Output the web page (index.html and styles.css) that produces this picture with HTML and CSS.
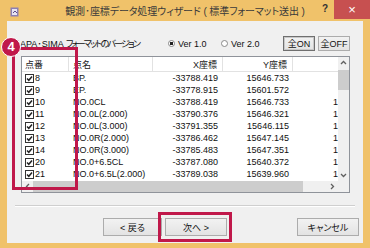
FILE: index.html
```html
<!DOCTYPE html>
<html lang="ja">
<head>
<meta charset="utf-8">
<link rel="stylesheet" href="styles.css">
</head>
<body>
<div class="window">
  <div class="titlebar">
    <div class="tb-left">
      <svg class="app-icon" width="10" height="10" viewBox="0 0 10 10">
        <rect x="0.5" y="0.5" width="8" height="9" fill="#8c7fb4"/>
        <rect x="2" y="2" width="5" height="6" fill="#e8e4f2"/>
        <path d="M3 6 L5 4 L7 6" stroke="#5a4b8a" stroke-width="1" fill="none"/>
      </svg>
    </div>
    <div class="title">観測･座標データ処理ウィザード ( 標準フォーマット送出 )</div>
    <div class="tb-right">
      <div class="help">?</div>
      <div class="close">×</div>
    </div>
  </div>

  <div class="client">
    <div class="top-row">
      <span class="label">APA･SIMA <span class="kana">フォーマットのバージョン</span></span>
      <span class="radio r1"><span class="dot on"></span>Ver 1.0</span>
      <span class="radio r2"><span class="dot"></span>Ver 2.0</span>
      <button class="btn small default">全ON</button>
      <button class="btn small">全OFF</button>
    </div>

    <div class="listview">
      <div class="lv-content">
        <div class="lv-row lv-head">
          <div class="c1">点番</div>
          <div class="c2">点名</div>
          <div class="c3">X座標</div>
          <div class="c4">Y座標</div>
          <div class="c5"></div>
        </div>
        <div class="lv-row"><div class="c1"><svg class="cb" width="9" height="9" viewBox="0 0 9 9"><rect x="0.5" y="0.5" width="8" height="8" fill="#fff" stroke="#333"/><path d="M2 4.5 L3.8 6.3 L7 2.5" stroke="#222" stroke-width="1.5" fill="none"/></svg>8</div><div class="c2">BP.</div><div class="c3">-33788.419</div><div class="c4">15646.733</div><div class="c5"></div></div>
        <div class="lv-row"><div class="c1"><svg class="cb" width="9" height="9" viewBox="0 0 9 9"><rect x="0.5" y="0.5" width="8" height="8" fill="#fff" stroke="#333"/><path d="M2 4.5 L3.8 6.3 L7 2.5" stroke="#222" stroke-width="1.5" fill="none"/></svg>9</div><div class="c2">EP.</div><div class="c3">-33778.915</div><div class="c4">15601.572</div><div class="c5"></div></div>
        <div class="lv-row"><div class="c1"><svg class="cb" width="9" height="9" viewBox="0 0 9 9"><rect x="0.5" y="0.5" width="8" height="8" fill="#fff" stroke="#333"/><path d="M2 4.5 L3.8 6.3 L7 2.5" stroke="#222" stroke-width="1.5" fill="none"/></svg>10</div><div class="c2">NO.0CL</div><div class="c3">-33788.419</div><div class="c4">15646.733</div><div class="c5">1</div></div>
        <div class="lv-row"><div class="c1"><svg class="cb" width="9" height="9" viewBox="0 0 9 9"><rect x="0.5" y="0.5" width="8" height="8" fill="#fff" stroke="#333"/><path d="M2 4.5 L3.8 6.3 L7 2.5" stroke="#222" stroke-width="1.5" fill="none"/></svg>11</div><div class="c2">NO.0L(2.000)</div><div class="c3">-33790.376</div><div class="c4">15646.321</div><div class="c5">1</div></div>
        <div class="lv-row"><div class="c1"><svg class="cb" width="9" height="9" viewBox="0 0 9 9"><rect x="0.5" y="0.5" width="8" height="8" fill="#fff" stroke="#333"/><path d="M2 4.5 L3.8 6.3 L7 2.5" stroke="#222" stroke-width="1.5" fill="none"/></svg>12</div><div class="c2">NO.0L(3.000)</div><div class="c3">-33791.355</div><div class="c4">15646.115</div><div class="c5">1</div></div>
        <div class="lv-row"><div class="c1"><svg class="cb" width="9" height="9" viewBox="0 0 9 9"><rect x="0.5" y="0.5" width="8" height="8" fill="#fff" stroke="#333"/><path d="M2 4.5 L3.8 6.3 L7 2.5" stroke="#222" stroke-width="1.5" fill="none"/></svg>13</div><div class="c2">NO.0R(2.000)</div><div class="c3">-33786.462</div><div class="c4">15647.145</div><div class="c5">1</div></div>
        <div class="lv-row"><div class="c1"><svg class="cb" width="9" height="9" viewBox="0 0 9 9"><rect x="0.5" y="0.5" width="8" height="8" fill="#fff" stroke="#333"/><path d="M2 4.5 L3.8 6.3 L7 2.5" stroke="#222" stroke-width="1.5" fill="none"/></svg>14</div><div class="c2">NO.0R(3.000)</div><div class="c3">-33785.483</div><div class="c4">15647.351</div><div class="c5">1</div></div>
        <div class="lv-row"><div class="c1"><svg class="cb" width="9" height="9" viewBox="0 0 9 9"><rect x="0.5" y="0.5" width="8" height="8" fill="#fff" stroke="#333"/><path d="M2 4.5 L3.8 6.3 L7 2.5" stroke="#222" stroke-width="1.5" fill="none"/></svg>20</div><div class="c2">NO.0+6.5CL</div><div class="c3">-33787.080</div><div class="c4">15640.372</div><div class="c5">1</div></div>
        <div class="lv-row"><div class="c1"><svg class="cb" width="9" height="9" viewBox="0 0 9 9"><rect x="0.5" y="0.5" width="8" height="8" fill="#fff" stroke="#333"/><path d="M2 4.5 L3.8 6.3 L7 2.5" stroke="#222" stroke-width="1.5" fill="none"/></svg>21</div><div class="c2">NO.0+6.5L(2.000)</div><div class="c3">-33789.038</div><div class="c4">15639.960</div><div class="c5">1</div></div>
      </div>
      <div class="vscroll">
        <div class="arrow"><svg width="7" height="5" viewBox="0 0 7 5"><path d="M1 4 L3.5 1.5 L6 4" stroke="#606060" stroke-width="1.3" fill="none"/></svg></div>
        <div class="vthumb"></div>
        <div class="spacer"></div>
        <div class="arrow"><svg width="7" height="5" viewBox="0 0 7 5"><path d="M1 1 L3.5 3.5 L6 1" stroke="#606060" stroke-width="1.3" fill="none"/></svg></div>
      </div>
      <div class="hscroll">
        <div class="arrow"><svg width="5" height="7" viewBox="0 0 5 7"><path d="M4 1 L1.5 3.5 L4 6" stroke="#606060" stroke-width="1.3" fill="none"/></svg></div>
        <div class="hthumb"></div>
        <div class="spacer"></div>
        <div class="arrow"><svg width="5" height="7" viewBox="0 0 5 7"><path d="M1 1 L3.5 3.5 L1 6" stroke="#606060" stroke-width="1.3" fill="none"/></svg></div>
      </div>
      <div class="corner"></div>
    </div>

    <div class="separator"></div>

    <div class="button-row">
      <button class="btn back">&lt; 戻る</button>
      <button class="btn next">次へ &gt;</button>
      <button class="btn cancel">キャンセル</button>
    </div>
  </div>

  <div class="hl hl1"></div>
  <div class="badge">4</div>
  <div class="hl hl2"></div>
</div>
</body>
</html>
```

FILE: styles.css
```css
html, body {
  margin: 0;
  padding: 0;
}

body {
  width: 370px;
  height: 248px;
  overflow: hidden;
  font-family: "Liberation Sans", "Noto Sans CJK JP", sans-serif;
  font-size: 9px;
  color: #111;
  font-feature-settings: "palt";
}

.window {
  position: relative;
  width: 370px;
  height: 248px;
  background: #f0c26a;
  display: flex;
  flex-direction: column;
}

/* title bar */
.titlebar {
  height: 21px;
  display: grid;
  grid-template-columns: 1fr auto 1fr;
}

.tb-left {
  display: flex;
  align-items: flex-start;
  padding: 7px 0 0 10px;
}

.title {
  align-self: center;
  font-size: 10px;
  letter-spacing: -0.1px;
  color: #3a3a3a;
  white-space: nowrap;
}

.tb-right {
  display: flex;
  justify-content: flex-end;
  align-items: flex-start;
}

.help {
  font-family: "Liberation Sans", sans-serif;
  font-weight: bold;
  font-size: 10px;
  color: #333;
  margin: 3px 6px 0 0;
}

.close {
  width: 36px;
  height: 19px;
  background: #c75050;
  color: #fff;
  font-size: 13px;
  line-height: 19px;
  text-align: center;
}

/* client area */
.client {
  margin: 0 7px;
  height: 222px;
  background: #f0f0f0;
  display: flex;
  flex-direction: column;
}

.top-row {
  display: flex;
  align-items: center;
  height: 15px;
  margin: 15px 13px 0 13px;
  white-space: nowrap;
}

.label {
  width: 148px;
  flex: none;
}

.kana {
  letter-spacing: -1.8px;
}

.radio {
  display: flex;
  align-items: center;
  gap: 3px;
  flex: none;
}

.r1 { width: 53px; }
.r2 { width: 62px; }

.dot {
  width: 7px;
  height: 7px;
  border: 1px solid #8a8a8a;
  border-radius: 50%;
  background: #fff;
  box-sizing: border-box;
}

.dot.on {
  background: radial-gradient(circle, #222 0 1.6px, #fff 2px);
}

.btn {
  font-family: inherit;
  font-size: 9px;
  font-feature-settings: "palt";
  color: #111;
  background: linear-gradient(#f2f2f2, #e3e3e3);
  border: 1px solid #acacac;
  padding: 0;
  margin: 0;
  box-sizing: border-box;
}

.btn.small {
  width: 32px;
  height: 15px;
  flex: none;
}

.btn.small + .btn.small {
  margin-left: 3px;
}

.btn.default {
  border-color: #6f6f6f;
  box-shadow: inset 0 0 0 1px #c8c8c8;
}

/* list view */
.listview {
  margin: 5px 0 0 14px;
  width: 329px;
  height: 137px;
  box-sizing: border-box;
  border: 1px solid #8f939a;
  background: #fff;
  display: grid;
  grid-template-columns: 316px 11px;
  grid-template-rows: 124px 11px;
}

.lv-content {
  overflow: hidden;
}

.lv-row {
  display: grid;
  grid-template-columns: 47px 84px 70px 70px 60px;
  height: 12px;
  align-items: center;
  white-space: nowrap;
}

.lv-row > div {
  overflow: hidden;
}

.lv-head {
  height: 15px;
  border-bottom: 1px solid #e2e2e2;
  box-sizing: border-box;
  align-items: stretch;
  color: #222;
}

.lv-head > div {
  border-right: 1px solid #e2e2e2;
  display: flex;
  align-items: center;
}

.lv-head .c3, .lv-head .c4 {
  justify-content: flex-end;
}

.c1 {
  padding-left: 3px;
  display: flex;
  align-items: center;
  gap: 1px;
}

.c2 { padding-left: 4px; }
.c3 { text-align: right; padding-right: 5px; }
.c4 { text-align: right; padding-right: 4px; }
.lv-head .c4 { padding-right: 5px; }
.c5 { padding-left: 40px; }

.cb {
  flex: none;
  display: block;
}

.vscroll {
  background: #f0f0f0;
  display: flex;
  flex-direction: column;
}

.hscroll {
  background: #f0f0f0;
  display: flex;
}

.arrow {
  width: 11px;
  height: 11px;
  display: flex;
  align-items: center;
  justify-content: center;
  flex: none;
}

.vthumb {
  height: 20px;
  margin-top: 2px;
  background: #cdcdcd;
}

.hthumb {
  width: 270px;
  background: #cdcdcd;
}

.spacer { flex: 1; }

.corner { background: #f0f0f0; }

.separator {
  margin: 12px 8px 0 8px;
  height: 1px;
  background: #cfcfcf;
  border-bottom: 1px solid #fff;
}

.button-row {
  display: flex;
  margin: 11px 4px 0 96px;
  height: 18px;
}

.button-row .btn { height: 18px; }
.back { width: 59px; }
.next { width: 62px; margin-left: 3px; }
.cancel { width: 62px; margin-left: auto; }

/* annotations overlaid on the screenshot */
.hl {
  position: absolute;
  box-sizing: border-box;
  border: 3px solid #c0184a;
}

.hl1 { left: 12px; top: 47px; width: 66px; height: 143px; }
.hl2 { left: 158px; top: 212px; width: 74px; height: 30px; }

.badge {
  position: absolute;
  left: 1px;
  top: 37px;
  width: 20px;
  height: 20px;
  box-sizing: border-box;
  border-radius: 50%;
  border: 1.5px solid #fff;
  background: #c0184a;
  color: #fff;
  font-family: "Liberation Sans", sans-serif;
  font-weight: bold;
  font-size: 13px;
  line-height: 17px;
  text-align: center;
}
```
